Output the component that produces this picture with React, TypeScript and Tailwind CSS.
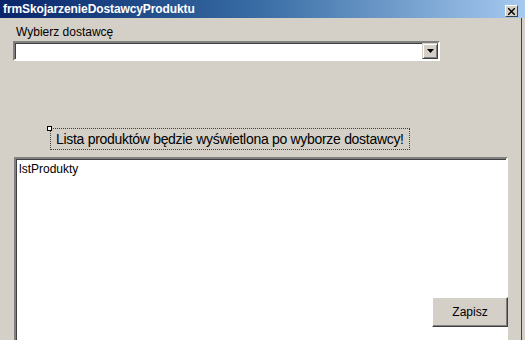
export default function App() {
  return (
    <div className="w-[525px] h-[340px] overflow-hidden bg-[#d4d0c8] font-['Liberation_Sans',Arial,sans-serif] text-black flex flex-col">
      {/* title bar */}
      <div className="h-[18px] shrink-0 flex items-center justify-between pl-[3px] pr-[7px] bg-gradient-to-r from-[#0a246a] via-[#3a6ea5] to-[#a6caf0]">
        <span className="text-white font-bold text-[12px] leading-none tracking-[-0.1px]">
          frmSkojarzenieDostawcyProduktu
        </span>
        <div className="w-[13px] h-[12px] mt-[4px] flex items-center justify-center bg-[#d4d0c8] border border-t-white border-l-white border-r-[#404040] border-b-[#404040]">
          <svg width="7" height="7" viewBox="0 0 7 7">
            <path d="M0 0L7 7M7 0L0 7" stroke="black" strokeWidth="1.4" />
          </svg>
        </div>
      </div>

      {/* form body */}
      <div className="flex-1 flex">
        <div className="relative flex-1 flex flex-col pl-[13px] pr-[13px] pt-[7px]">
          <span className="ml-[3px] text-[12px] leading-[14px]">Wybierz dostawcę</span>

          {/* combo */}
          <div className="mt-[2px] w-[427px] h-[20px] flex bg-white border-2 border-t-[#808080] border-l-[#808080] border-r-white border-b-white shadow-[inset_1px_1px_0_#404040]">
            <div className="flex-1" />
            <div className="w-[16px] h-[16px] flex items-center justify-center bg-[#d4d0c8] border border-t-[#d4d0c8] border-l-[#d4d0c8] border-r-[#404040] border-b-[#404040] shadow-[inset_1px_1px_0_white,inset_-1px_-1px_0_#808080]">
              <svg width="7" height="4" viewBox="0 0 7 4">
                <path d="M0 0H7L3.5 4Z" fill="black" />
              </svg>
            </div>
          </div>

          {/* label with selection handle */}
          <div className="relative mt-[67px] ml-[37px] w-[360px] h-[22px] border border-dotted border-[#404040] flex items-center pl-[5px]">
            <span className="whitespace-nowrap text-[14px] leading-none tracking-[-0.3px]">
              Lista produktów będzie wyświetlona po wyborze dostawcy!
            </span>
            <div className="absolute -left-[4px] -top-[3px] w-[5px] h-[5px] bg-white border border-black" />
          </div>

          {/* list box */}
          <div className="relative mt-[7px] ml-[1px] w-[494px] flex-1 bg-white border-2 border-b-0 border-t-[#808080] border-l-[#808080] border-r-white shadow-[inset_1px_1px_0_#404040]">
            <div className="pl-[3px] pt-[3px] text-[12px] leading-[14px]">lstProdukty</div>
            <button className="absolute left-[416px] top-[138px] w-[76px] h-[30px] bg-[#d4d0c8] text-[12px] border border-t-white border-l-white border-r-[#404040] border-b-[#404040] shadow-[inset_-1px_-1px_0_#808080]">
              Zapisz
            </button>
          </div>
        </div>
        <div className="w-[1px] bg-[#404040]" />
        <div className="w-[3px]" />
      </div>
    </div>
  );
}
